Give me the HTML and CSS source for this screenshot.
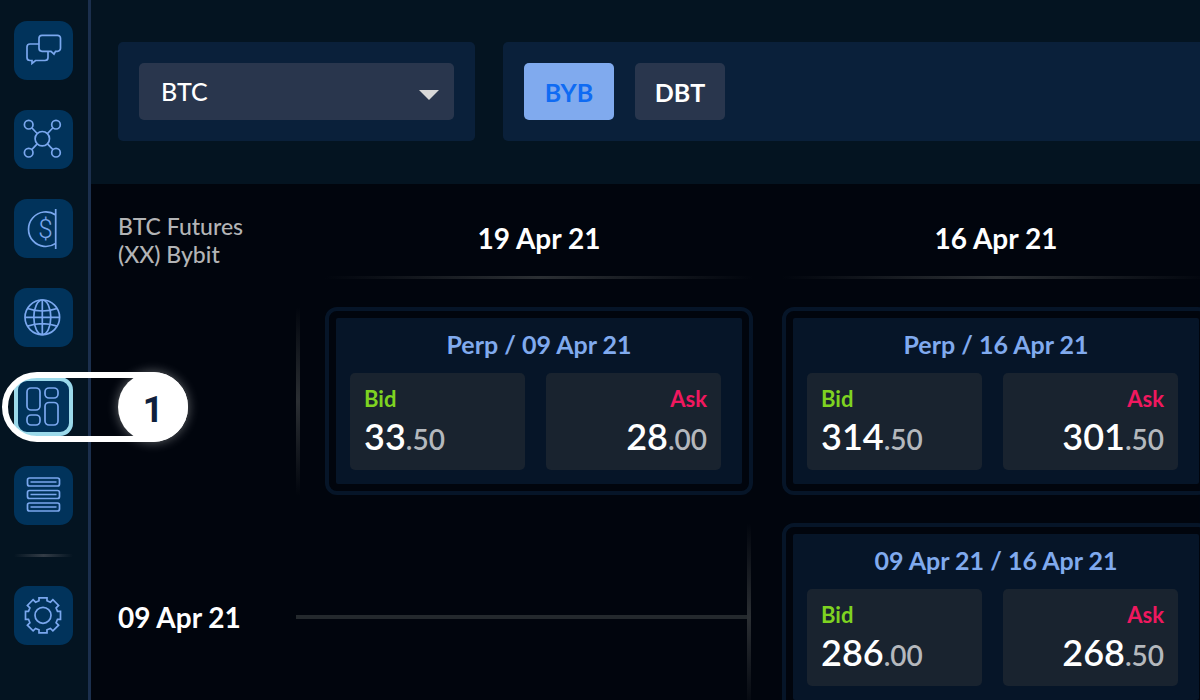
FILE: index.html
```html
<!DOCTYPE html>
<html lang="en">
<head>
    <meta charset="UTF-8">
    <meta name="viewport" content="width=device-width, initial-scale=1.0">
    <title>BTC Futures Spreads</title>
    <link rel="stylesheet" href="styles.css">
</head>
<body>
    <nav class="sidebar">
        <button class="tile" aria-label="Chat">
            <svg viewBox="0 0 59 59">
                <path d="M28 14.3h15.5a3 3 0 0 1 3 3v10a3 3 0 0 1-3 3h-2l-1.5 2.9-3-2.9H28a3 3 0 0 1-3-3v-10a3 3 0 0 1 3-3z"/>
                <path d="M25 23h-9a3 3 0 0 0-3 3v10.5a3 3 0 0 0 3 3h2v2.9l3.5-2.9H31a3 3 0 0 0 3-3V30.5"/>
            </svg>
        </button>
        <button class="tile" aria-label="Network">
            <svg viewBox="0 0 59 59">
                <circle cx="28.3" cy="28.7" r="7.2"/>
                <circle cx="14.7" cy="14.7" r="4.3"/>
                <circle cx="42" cy="14.7" r="4.3"/>
                <circle cx="14.7" cy="42.7" r="4.3"/>
                <circle cx="42" cy="42.7" r="4.3"/>
                <path d="M18 18l5.2 5.5M38.7 18l-5.2 5.5M18 39.4l5.2-5.5M38.7 39.4l-5.2-5.5"/>
            </svg>
        </button>
        <button class="tile" aria-label="Payments">
            <svg viewBox="0 0 59 59">
                <path d="M41.7 10v40M41.7 16a17.3 17.3 0 1 0 0 28.4"/>
                <text x="31.5" y="39" text-anchor="middle">$</text>
            </svg>
        </button>
        <button class="tile" aria-label="Markets">
            <svg viewBox="0 0 59 59">
                <circle cx="28.3" cy="29.3" r="17.3"/>
                <ellipse cx="28.3" cy="29.3" rx="8.5" ry="17.3"/>
                <path d="M28.3 12v34.6M11 29.3h34.6M13.5 20.5q14.8 5 29.6 0M13.5 38.1q14.8-5 29.6 0"/>
            </svg>
        </button>
        <button class="tile active" aria-label="Spread matrix">
            <svg viewBox="0 0 59 59">
                <rect x="13" y="11" width="13" height="22" rx="4"/>
                <rect x="31" y="11" width="13" height="10" rx="4"/>
                <rect x="13" y="38" width="13" height="10" rx="4"/>
                <rect x="31" y="25.5" width="13" height="22.5" rx="4"/>
            </svg>
        </button>
        <button class="tile" aria-label="Orders">
            <svg viewBox="0 0 59 59">
                <rect x="13.5" y="12" width="32" height="8" rx="2"/>
                <rect x="13.5" y="24.5" width="32" height="8" rx="2"/>
                <rect x="13.5" y="37" width="32" height="8" rx="2"/>
                <path d="M16.5 16h26M16.5 28.5h26M16.5 41h26"/>
            </svg>
        </button>
        <span class="separator"></span>
        <button class="tile" aria-label="Settings">
            <svg viewBox="0 0 59 59">
                <circle cx="29" cy="29.3" r="8"/>
                <path transform="translate(29 29.3)" d="M-4-17.5H4V-14.5L7.4-13.1 9.9-15.6 15.6-9.9 13.1-7.4 14.5-4H17.5V4H14.5L13.1 7.4 15.6 9.9 9.9 15.6 7.4 13.1 4 14.5V17.5H-4V14.5L-7.4 13.1-9.9 15.6-15.6 9.9-13.1 7.4-14.5 4H-17.5V-4H-14.5L-13.1-7.4-15.6-9.9-9.9-15.6-7.4-13.1-4-14.5z"/>
            </svg>
        </button>
        <div class="callout"><span>1</span></div>
    </nav>

    <main>
        <header class="toolbar">
            <div class="panel currency">
                <select id="currency" aria-label="Currency">
                    <option selected>BTC</option>
                    <option>ETH</option>
                </select>
            </div>
            <div class="panel exchanges">
                <button class="exchange selected">BYB</button>
                <button class="exchange">DBT</button>
            </div>
        </header>

        <section class="matrix">
            <div class="matrix-name">BTC Futures<br>(XX) Bybit</div>
            <div class="column-date">19 Apr 21</div>
            <div class="column-date">16 Apr 21</div>

            <div class="row-date"></div>
            <div class="cell">
                <span class="vline"></span>
                <article class="card">
                    <div class="card-body">
                        <h2>Perp / 09 Apr 21</h2>
                        <div class="quote bid"><span class="side">Bid</span><span class="price">33<small>.50</small></span></div>
                        <div class="quote ask"><span class="side">Ask</span><span class="price">28<small>.00</small></span></div>
                    </div>
                </article>
            </div>
            <div class="cell">
                <article class="card">
                    <div class="card-body">
                        <h2>Perp / 16 Apr 21</h2>
                        <div class="quote bid"><span class="side">Bid</span><span class="price">314<small>.50</small></span></div>
                        <div class="quote ask"><span class="side">Ask</span><span class="price">301<small>.50</small></span></div>
                    </div>
                </article>
            </div>

            <div class="row-date">09 Apr 21</div>
            <div class="cell connector">
                <span class="hline"></span>
                <span class="vline"></span>
            </div>
            <div class="cell">
                <article class="card">
                    <div class="card-body">
                        <h2>09 Apr 21 / 16 Apr 21</h2>
                        <div class="quote bid"><span class="side">Bid</span><span class="price">286<small>.00</small></span></div>
                        <div class="quote ask"><span class="side">Ask</span><span class="price">268<small>.50</small></span></div>
                    </div>
                </article>
            </div>
        </section>
    </main>
</body>
</html>
```

FILE: styles.css
```css
* {
    box-sizing: border-box;
}
body {
    margin: 0;
    height: 100vh;
    display: flex;
    overflow: hidden;
    font-family: Lato, sans-serif;
    color: #fff;
    background-color: #01050d;
}
button, select {
    font-family: inherit;
    border: none;
    cursor: pointer;
}

/* sidebar */
.sidebar {
    position: relative;
    z-index: 1;
    flex: none;
    display: flex;
    flex-direction: column;
    gap: 30px;
    width: 91px;
    padding: 21px 0 0 14px;
    background-color: #041421;
    border-right: 3px solid #1b2f4d;
}
.tile {
    flex: none;
    width: 59px;
    height: 59px;
    padding: 0;
    border-radius: 13px;
    background-color: #01335b;
}
.tile svg {
    display: block;
    width: 59px;
    height: 59px;
    fill: none;
    stroke: #7aa7ee;
    stroke-width: 1.7;
}
.tile text {
    font-family: Roboto, sans-serif;
    font-size: 26px;
    font-weight: 300;
    fill: #7aa7ee;
    stroke: none;
}
.tile.active {
    box-shadow: inset 0 0 0 4px #9bd9ea;
}
.separator {
    flex: none;
    width: 59px;
    height: 3px;
    margin: -1px 0;
    background: linear-gradient(to right, transparent, #333c46, transparent);
}
.callout {
    position: absolute;
    top: 372px;
    left: 2px;
    width: 186px;
    height: 70px;
    border: 6px solid #fff;
    border-radius: 35px;
}
.callout span {
    position: absolute;
    top: -6px;
    right: -6px;
    width: 70px;
    height: 70px;
    border-radius: 50%;
    background-color: #fff;
    box-shadow: 0 0 12px rgba(255, 255, 255, 0.4);
    color: #0f1f3d;
    font: bold 36px/76px Roboto, sans-serif;
    text-align: center;
}

/* toolbar */
main {
    flex: 1;
    min-width: 0;
}
.toolbar {
    display: flex;
    gap: 28px;
    padding: 42px 0 43px 27px;
    background-color: #041421;
}
.panel {
    display: flex;
    gap: 21px;
    padding: 21px;
    border-radius: 5px;
    background-color: #0a203a;
}
.currency {
    position: relative;
    width: 357px;
}
.currency::after {
    content: "";
    position: absolute;
    top: 48px;
    right: 36px;
    border: 10px solid transparent;
    border-top-color: #d8d8d8;
    border-bottom: none;
    pointer-events: none;
}
.currency select {
    appearance: none;
    width: 100%;
    height: 57px;
    padding: 0 22px 2px;
    border-radius: 5px;
    background-color: #29364d;
    color: #fff;
    font-size: 25px;
    font-weight: 500;
}
.exchanges {
    flex: 1;
    border-radius: 5px 0 0 5px;
}
.exchange {
    width: 90px;
    height: 57px;
    padding: 0;
    border-radius: 5px;
    background-color: #29364d;
    color: #fff;
    font-size: 25px;
    font-weight: 700;
}
.exchange.selected {
    background-color: #80aaee;
    color: #0f6bf3;
}

/* matrix */
.matrix {
    display: grid;
    grid-template-columns: 178px repeat(2, minmax(457px, 1fr));
    row-gap: 28px;
    padding-left: 27px;
}
.matrix-name {
    padding-top: 28px;
    color: #b3b4b6;
    font-size: 23px;
    font-weight: 500;
    line-height: 28px;
}
.column-date {
    height: 95px;
    margin-left: 29px;
    padding-top: 36px;
    background: linear-gradient(to right, transparent, #2b2f33, transparent) bottom / 100% 3px no-repeat;
    font-size: 28px;
    font-weight: 700;
    line-height: 36px;
    text-align: center;
}
.row-date {
    align-self: center;
    font-size: 28px;
    font-weight: 700;
    line-height: 36px;
}
.cell {
    display: flex;
    justify-content: flex-end;
    min-height: 188px;
}
.vline {
    width: 4px;
    margin-right: 25px;
    background: linear-gradient(transparent, #2b2f33, transparent);
}
.hline {
    flex: 1;
    align-self: center;
    height: 4px;
    background-color: #24292d;
}
.connector .vline {
    margin-right: 2px;
}
.card {
    flex: 1;
    padding: 7px;
    border: 4px solid #061528;
    border-radius: 12px;
}
.cell > .card:first-child {
    margin-left: 29px;
}
.card-body {
    display: grid;
    grid-template-columns: 1fr 1fr;
    column-gap: 21px;
    padding: 0 21px 14px 14px;
    border-radius: 2px;
    background-color: #061528;
}
.card h2 {
    grid-column: 1 / 3;
    margin: 0 -7px 0 0;
    height: 55px;
    font-size: 25px;
    font-weight: 700;
    line-height: 52px;
    text-align: center;
    color: #80aaee;
}
.quote {
    display: flex;
    flex-direction: column;
    height: 97px;
    padding: 12px 14px;
    border-radius: 5px;
    background-color: #19232f;
}
.ask {
    text-align: right;
}
.side {
    font-size: 22px;
    font-weight: 700;
    line-height: 28px;
    color: #7ed321;
}
.ask .side {
    color: #f0185f;
}
.price {
    font-size: 36px;
    font-weight: 600;
    line-height: 46px;
}
.price small {
    font-size: 28px;
    color: #b4b8bd;
}
```
